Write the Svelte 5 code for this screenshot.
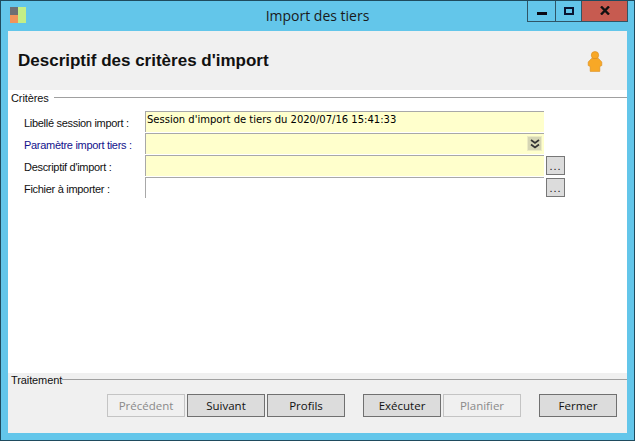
<script>
  const fields = [
    { label: 'Libellé session import :', value: "Session d'import de tiers du 2020/07/16 15:41:33", tone: 'yellow' },
    { label: 'Paramètre import tiers :', value: '', tone: 'yellow', link: true, combo: true },
    { label: "Descriptif d'import :", value: '', tone: 'yellow', browse: true },
    { label: 'Fichier à importer :', value: '', tone: 'white', browse: true }
  ];

  const actions = [
    { label: 'Précédent', disabled: true },
    { label: 'Suivant' },
    { label: 'Profils', gapAfter: true },
    { label: 'Exécuter' },
    { label: 'Planifier', disabled: true, gapAfter: true },
    { label: 'Fermer' }
  ];
</script>

<div class="window">
  <div class="titlebar">
    <svg class="app-icon" width="17" height="17" viewBox="0 0 17 17">
      <rect x="0" y="0" width="8" height="8" fill="#6f6f73" />
      <rect x="0" y="8" width="8" height="8" fill="#f2945a" />
      <rect x="8" y="0" width="8" height="16" fill="#c4ee86" />
    </svg>
    <div class="title">Import des tiers</div>
    <div class="controls">
      <div class="ctl min"><span></span></div>
      <div class="ctl max"><span></span></div>
      <div class="ctl close">
        <svg width="10" height="9" viewBox="0 0 10 9">
          <path d="M1 0.5 L9 8.5 M9 0.5 L1 8.5" stroke="#111" stroke-width="2.4" fill="none" />
        </svg>
      </div>
    </div>
  </div>

  <div class="client">
    <header>
      <h1>Descriptif des critères d'import</h1>
      <svg class="person" width="16" height="21" viewBox="0 0 16 21">
        <circle cx="8" cy="4.2" r="3.7" fill="#f8a826" stroke="#d98c1c" stroke-width="0.6" />
        <path d="M4.5 7.5 H11.5 L14.8 11 V14.5 L12.8 15.5 V20.4 H3.2 V15.5 L1.2 14.5 V11 Z" fill="#f8a826" stroke="#d98c1c" stroke-width="0.6" />
      </svg>
    </header>

    <main>
      <div class="group-title">
        <span>Critères</span>
        <i></i>
      </div>
      <div class="fields">
        {#each fields as f}
          <div class="row">
            <div class="label" class:link={f.link}>{f.label}</div>
            <div class="input {f.tone}">
              {f.value}
              {#if f.combo}
                <div class="combo-btn">
                  <svg width="10" height="10" viewBox="0 0 10 10">
                    <path d="M1 1 L5 4 L9 1 M1 5.5 L5 8.5 L9 5.5" stroke="#333" stroke-width="1.7" fill="none" />
                  </svg>
                </div>
              {/if}
            </div>
            {#if f.browse}
              <button class="browse">...</button>
            {/if}
          </div>
        {/each}
      </div>
    </main>

    <footer>
      <div class="group-title tight">
        <span>Traitement</span>
        <i></i>
      </div>
      <div class="actions">
        {#each actions as a}
          <button class="action" class:spaced={a.gapAfter} disabled={a.disabled}>{a.label}</button>
        {/each}
      </div>
    </footer>
  </div>
</div>

<style>
  :global(body) {
    margin: 0;
  }

  .window {
    width: 635px;
    height: 441px;
    box-sizing: border-box;
    background: #63c6ea;
    border: 1px solid #1f4b5e;
    display: flex;
    flex-direction: column;
    overflow: hidden;
  }

  .titlebar {
    height: 30px;
    flex: none;
    display: flex;
    position: relative;
    padding-left: 9px;
  }

  .app-icon {
    margin-top: 6px;
  }

  .title {
    position: absolute;
    left: 0;
    right: 0;
    top: 5px;
    text-align: center;
    font: 14px "Open Sans", sans-serif;
    color: #1a1a1a;
  }

  .controls {
    position: absolute;
    right: 6px;
    top: -1px;
    height: 22px;
    display: flex;
    border: 1px solid #2f5566;
    border-top: 0;
    box-sizing: border-box;
  }

  .ctl {
    display: flex;
    align-items: center;
    justify-content: center;
    box-sizing: border-box;
    height: 21px;
  }

  .min {
    width: 28px;
    border-right: 1px solid #2f5566;
  }

  .min span {
    width: 10px;
    height: 3px;
    margin-top: 6px;
    background: #0a0a14;
  }

  .max {
    width: 26px;
    border-right: 1px solid #2f5566;
  }

  .max span {
    width: 10px;
    height: 8px;
    box-sizing: border-box;
    border: 2px solid #0a1430;
  }

  .close {
    width: 45px;
    background: #c75b50;
  }

  .client {
    margin: 0 7px 7px;
    flex: 1;
    min-height: 0;
    display: flex;
    flex-direction: column;
    background: #fff;
    font-family: "Liberation Sans", sans-serif;
  }

  header {
    height: 59px;
    flex: none;
    box-sizing: border-box;
    background: #f0f0f0;
    display: flex;
    align-items: center;
    justify-content: space-between;
    padding: 1px 24px 0 10px;
  }

  h1 {
    margin: 0;
    font: bold 17px "Liberation Sans", sans-serif;
    color: #111;
  }

  main {
    flex: 1;
    min-height: 0;
  }

  .group-title {
    display: flex;
    align-items: center;
    height: 13px;
    margin-top: 1px;
    padding-left: 3px;
    font-size: 11px;
    letter-spacing: -0.1px;
    color: #111;
  }

  .group-title i {
    flex: 1;
    height: 1px;
    margin-left: 5px;
    background: #a0a0a0;
  }

  .group-title.tight {
    margin-top: 0;
  }

  .group-title.tight i {
    margin-left: 0;
  }

  .fields {
    margin-top: 7px;
    display: flex;
    flex-direction: column;
    gap: 1px;
  }

  .row {
    height: 21px;
    display: flex;
    align-items: flex-start;
  }

  .label {
    width: 121px;
    margin-left: 16px;
    padding-top: 6px;
    font-size: 11px;
    letter-spacing: -0.3px;
    color: #111;
  }

  .label.link {
    color: #12128c;
  }

  .input {
    width: 399px;
    height: 21px;
    box-sizing: border-box;
    border-top: 1px solid #a8a8a8;
    border-left: 1px solid #a8a8a8;
    padding: 2px 0 0 1px;
    font: 10px "DejaVu Sans", sans-serif;
    color: #000;
    white-space: nowrap;
    position: relative;
  }

  .yellow {
    background: #ffffcc;
  }

  .white {
    background: #fff;
  }

  .combo-btn {
    position: absolute;
    right: 2px;
    top: 2px;
    width: 15px;
    height: 15px;
    display: flex;
    align-items: center;
    justify-content: center;
    background: #d5d5b4;
    border: 1px solid #ecebc4;
    box-sizing: border-box;
  }

  .browse {
    width: 19px;
    height: 19px;
    margin: 1px 0 0 2px;
    padding: 0 0 2px;
    box-sizing: border-box;
    background: #dcdcdc;
    border: 1px solid #777;
    font: 11px "Liberation Sans", sans-serif;
    letter-spacing: 1px;
    color: #111;
    display: flex;
    align-items: flex-end;
    justify-content: center;
  }

  footer {
    height: 60px;
    flex: none;
    background: #f0f0f0;
    display: flex;
    flex-direction: column;
  }

  .actions {
    display: flex;
    justify-content: flex-end;
    gap: 2px;
    margin-top: 8px;
    padding-right: 10px;
  }

  .action {
    width: 78px;
    height: 23px;
    padding: 0;
    box-sizing: border-box;
    background: #dcdcdc;
    border: 1px solid #707070;
    font: 11.5px "Open Sans", sans-serif;
    color: #111;
  }

  .action.spaced {
    margin-right: 16px;
  }

  .action:disabled {
    background: #f0f0f0;
    border-color: #c4c4c4;
    color: #8a8a8a;
  }
</style>
